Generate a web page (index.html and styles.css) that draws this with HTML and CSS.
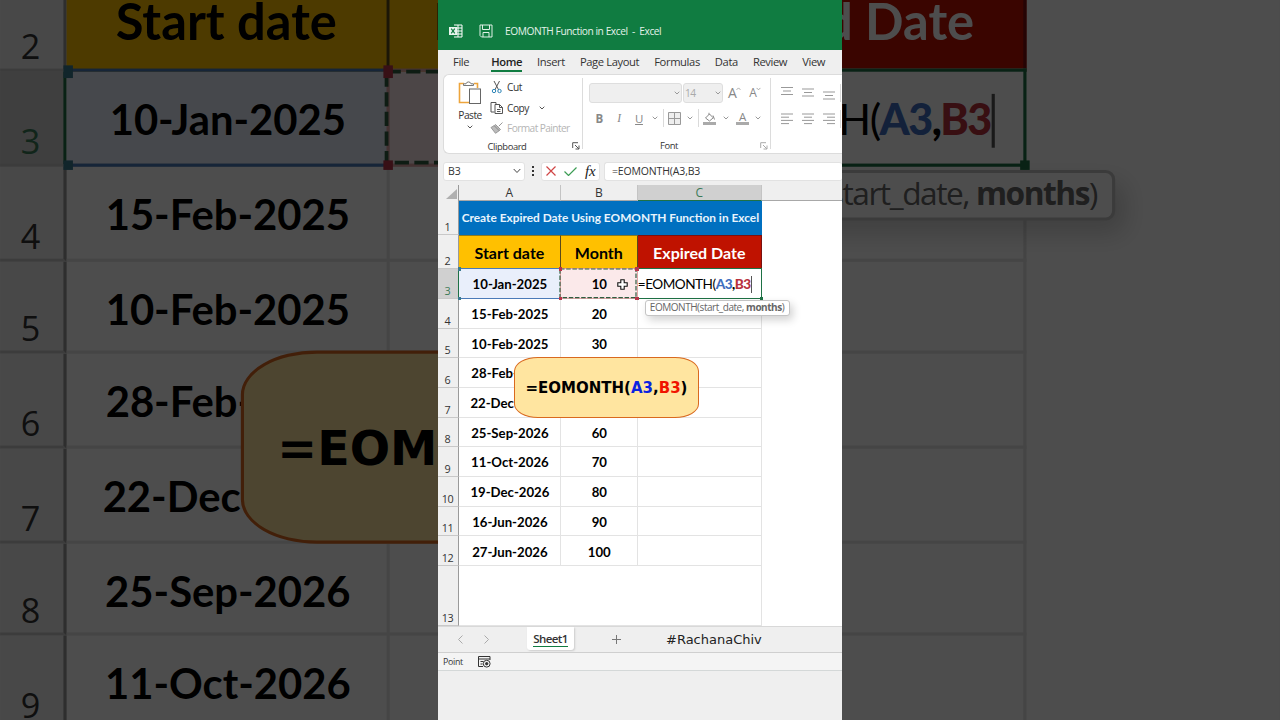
FILE: index.html
```html
<!DOCTYPE html>
<html lang="en">
<head>
  <meta charset="utf-8">
  <title>EOMONTH Function in Excel</title>
  <link rel="stylesheet" href="styles.css">
</head>
<body>
  <div class="backdrop"></div>

  <div class="phone">
    <header class="titlebar">
      <svg class="logo" width="14" height="14" viewBox="0 0 14 14">
        <path d="M5 1h8v12H5M9 1v12M5 4h8M5 7h8M5 10h8" fill="none" stroke="#fff" stroke-width="1"/>
        <rect x="0" y="3" width="8" height="8" fill="#e9f5ee"/>
        <path d="M2.2 4.6l3.6 4.8M5.8 4.6L2.2 9.4" stroke="#107c41" stroke-width="1.2"/>
      </svg>
      <svg class="save" width="14" height="14" viewBox="0 0 14 14" fill="none" stroke="#dff0e6">
        <path d="M1 1h12v12H2.5L1 11.5zM3.5 1v4.5h7V1M4 13V8.5h6V13"/>
      </svg>
      <span class="doc-name">EOMONTH Function in Excel &nbsp;-&nbsp; Excel</span>
    </header>

    <nav class="menu">
      <span class="file">File</span>
      <span class="active">Home</span>
      <span>Insert</span>
      <span>Page Layout</span>
      <span>Formulas</span>
      <span>Data</span>
      <span>Review</span>
      <span>View</span>
    </nav>

    <section class="ribbon">
      <div class="group clipboard">
        <div class="tools">
          <div class="paste">
            <svg width="24" height="25" viewBox="0 0 24 25">
              <path d="M6 3.5H1.5v19H11M16 3.5h3.5V8" fill="none" stroke="#eda53c" stroke-width="1.6"/>
              <path d="M5.5 5.5V3.8H8a2.6 2.6 0 0 1 5 0h2.5v1.7z" fill="#fff" stroke="#777"/>
              <rect x="11.5" y="9" width="11" height="14.5" fill="#fff" stroke="#666"/>
            </svg>
            <span>Paste</span>
            <svg class="chev" width="6" height="4" viewBox="0 0 6 4"><path d="M.7.7L3 3 5.3.7"/></svg>
          </div>
          <div class="actions">
            <div>
              <svg width="14" height="14" viewBox="0 0 14 14" fill="none">
                <path d="M4 1l4.7 9M9.5 1L4.8 10" stroke="#555"/>
                <circle cx="4" cy="11" r="1.7" stroke="#2f86b8"/><circle cx="9.5" cy="11" r="1.7" stroke="#2f86b8"/>
              </svg>
              <span>Cut</span>
            </div>
            <div>
              <svg width="14" height="14" viewBox="0 0 14 14" fill="#fff" stroke="#555">
                <path d="M4.5 11H1V1.5h5V3"/>
                <path d="M5 3.5h4.5l3 3v6H5zM9.5 3.5v3h3M7 8.5h3.5M7 10.5h3.5"/>
              </svg>
              <span>Copy</span>
              <svg class="chev" width="6" height="4" viewBox="0 0 6 4"><path d="M.7.7L3 3 5.3.7"/></svg>
            </div>
            <div class="off">
              <svg width="14" height="14" viewBox="0 0 14 14" fill="#bbb" stroke="#999">
                <path d="M12.5 1.5L8.8 5.2M5.5 3.5l5 5-1.3 1.2-5-5zM4.2 4.7L1 6.5l4.5 5.8 3.7-2.6z"/>
              </svg>
              <span>Format Painter</span>
            </div>
          </div>
        </div>
        <div class="label">Clipboard
          <svg class="launcher" width="8" height="8" viewBox="0 0 8 8"><path d="M.7 6V.7H6M3 3l4 4M7 3.5V7H3.5"/></svg>
        </div>
      </div>

      <div class="group font">
        <div class="tools">
          <div class="line">
            <div class="select family"><svg class="chev" width="6" height="4" viewBox="0 0 6 4"><path d="M.7.7L3 3 5.3.7"/></svg></div>
            <div class="select size">14<svg class="chev" width="6" height="4" viewBox="0 0 6 4"><path d="M.7.7L3 3 5.3.7"/></svg></div>
            <span class="grow">A<svg class="chev" width="5" height="4" viewBox="0 0 6 4"><path d="M.7 3L3 .7 5.3 3"/></svg></span>
            <span class="shrink">A<svg class="chev" width="5" height="4" viewBox="0 0 6 4"><path d="M.7.7L3 3 5.3.7"/></svg></span>
          </div>
          <div class="line styles">
            <b>B</b><i>I</i><u>U</u>
            <svg class="chev" width="6" height="4" viewBox="0 0 6 4"><path d="M.7.7L3 3 5.3.7"/></svg>
            <span class="bar"></span>
            <svg class="borders" width="13" height="13" viewBox="0 0 13 13" fill="#eee" stroke="#999">
              <path d="M.5.5h12v12H.5zM6.5.5v12M.5 6.5h12"/>
            </svg>
            <svg class="chev" width="6" height="4" viewBox="0 0 6 4"><path d="M.7.7L3 3 5.3.7"/></svg>
            <span class="bar"></span>
            <svg class="fill" width="14" height="13" viewBox="0 0 14 13">
              <path d="M6 .8v2M2.5 6L6.5 2l3.7 3.8L6.5 9zM10 3.5l1.5 4" fill="none" stroke="#888"/>
              <rect y="10" width="13" height="3" fill="#aaa"/>
            </svg>
            <svg class="chev" width="6" height="4" viewBox="0 0 6 4"><path d="M.7.7L3 3 5.3.7"/></svg>
            <span class="color">A</span>
            <svg class="chev" width="6" height="4" viewBox="0 0 6 4"><path d="M.7.7L3 3 5.3.7"/></svg>
          </div>
        </div>
        <div class="label">Font
          <svg class="launcher off" width="8" height="8" viewBox="0 0 8 8"><path d="M.7 6V.7H6M3 3l4 4M7 3.5V7H3.5"/></svg>
        </div>
      </div>

      <div class="group align">
        <svg width="12" height="14" viewBox="0 0 12 14"><path d="M0 1.5h12M2 5h8M0 8.5h12"/></svg>
        <svg width="12" height="14" viewBox="0 0 12 14"><path d="M0 3h12M2 6.5h8M0 10h12"/></svg>
        <svg width="12" height="14" viewBox="0 0 12 14"><path d="M0 6h12M2 9.5h8M0 13h12"/></svg>
        <span class="bar"></span>
        <svg width="12" height="14" viewBox="0 0 12 14"><path d="M0 2h12M0 5.2h8M0 8.4h12M0 11.6h8"/></svg>
        <svg width="12" height="14" viewBox="0 0 12 14"><path d="M0 2h12M2 5.2h8M0 8.4h12M2 11.6h8"/></svg>
        <svg width="12" height="14" viewBox="0 0 12 14"><path d="M0 2h12M4 5.2h8M0 8.4h12M4 11.6h8"/></svg>
        <span class="bar"></span>
      </div>
    </section>

    <section class="formula-bar">
      <div class="name-box">B3
        <svg width="8" height="6" viewBox="0 0 8 6" fill="none" stroke="#444"><path d="M.7 1L4 4.5 7.3 1"/></svg>
      </div>
      <svg class="dots" width="2" height="10" viewBox="0 0 2 10" fill="#333"><path d="M0 0h2v2H0zM0 4h2v2H0zM0 8h2v2H0z"/></svg>
      <div class="fx-box">
        <svg width="10" height="10" viewBox="0 0 10 10" fill="none" stroke="#d04545" stroke-width="1.2"><path d="M.5.5l9 9M9.5.5l-9 9"/></svg>
        <svg width="13" height="9" viewBox="0 0 13 9" fill="none" stroke="#3d9d55" stroke-width="1.2"><path d="M.5 4.5l4 4L12.5.5"/></svg>
        <i>fx</i>
      </div>
      <div class="formula">=EOMONTH(A3,B3</div>
    </section>

    <section class="sheet">
      <div class="corner"><svg width="11" height="10" viewBox="0 0 11 10"><path d="M11 0v10H0z" fill="#b0b0b0"/></svg></div>
      <div class="col">A</div>
      <div class="col">B</div>
      <div class="col on">C</div>
      <div class="col rest"></div>

      <div class="row-no">1</div>
      <div class="banner">Create Expired Date Using EOMONTH Function in Excel</div>

      <div class="row-no">2</div>
      <div class="head">Start date</div>
      <div class="head">Month</div>
      <div class="head red">Expired Date</div>

      <div class="row-no on">3</div>
      <div class="cell ref-a">10-Jan-2025<span class="range"></span>
        <em class="h tl"></em><em class="h bl"></em>
      </div>
      <div class="cell ref-b">10
        <span class="range"></span>
        <svg class="ants" width="100%" height="100%"><rect width="100%" height="100%"/></svg>
        <em class="h tl"></em><em class="h tr"></em><em class="h bl"></em><em class="h br"></em>
        <svg class="cursor" width="11" height="11" viewBox="0 0 11 11"><path d="M3.8.8h3.4v3h3v3.4h-3v3H3.8v-3h-3V3.8h3z" fill="#fff" stroke="#111" stroke-width="1.1"/></svg>
      </div>
      <div class="cell editing">
        <span>=EOMONTH(</span><b class="blue">A3</b><b>,</b><b class="crimson">B3</b><span class="caret"></span>
        <div class="hint">EOMONTH(start_date, <b>months</b>)</div>
      </div>

      <div class="row-no">4</div>
      <div class="cell">15-Feb-2025</div><div class="cell">20</div><div class="cell"></div>
      <div class="row-no">5</div>
      <div class="cell">10-Feb-2025</div><div class="cell">30</div><div class="cell"></div>
      <div class="row-no">6</div>
      <div class="cell">28-Feb-2025</div><div class="cell">40</div><div class="cell"></div>
      <div class="row-no">7</div>
      <div class="cell">22-Dec-2025</div><div class="cell">50</div><div class="cell"></div>
      <div class="row-no">8</div>
      <div class="cell">25-Sep-2026</div><div class="cell">60</div><div class="cell"></div>
      <div class="row-no">9</div>
      <div class="cell">11-Oct-2026</div><div class="cell">70</div><div class="cell"></div>
      <div class="row-no">10</div>
      <div class="cell">19-Dec-2026</div><div class="cell">80</div><div class="cell"></div>
      <div class="row-no">11</div>
      <div class="cell">16-Jun-2026</div><div class="cell">90</div><div class="cell"></div>
      <div class="row-no">12</div>
      <div class="cell">27-Jun-2026</div><div class="cell">100</div><div class="cell"></div>
      <div class="row-no">13</div>
      <div class="cell blank"></div>

      <div class="callout">=EOMONTH(<span class="a">A3</span>,<span class="b">B3</span>)</div>
    </section>

    <footer class="tabs">
      <svg width="5" height="9" viewBox="0 0 5 9"><path d="M4.5.5l-4 4 4 4"/></svg>
      <svg width="5" height="9" viewBox="0 0 5 9"><path d="M.5.5l4 4-4 4"/></svg>
      <div class="tab"><span>Sheet1</span></div>
      <svg class="plus" width="9" height="9" viewBox="0 0 9 9"><path d="M4.5 0v9M0 4.5h9"/></svg>
      <span class="handle">#RachanaChiv</span>
    </footer>

    <footer class="status">
      <span>Point</span>
      <svg width="13" height="12" viewBox="0 0 13 12" fill="none" stroke="#333">
        <path d="M5 10.5H.5V.5h11.5V4M.5 3h11.5M2.5 5.5h3M2.5 8h2"/>
        <circle cx="8.7" cy="7.7" r="3.4"/><circle cx="8.7" cy="7.7" r="1.2" fill="#333"/>
      </svg>
    </footer>
  </div>

  <script>
    // the dimmed backdrop is an enlarged copy of the phone screen
    const phone = document.querySelector('.phone');
    document.querySelector('.backdrop').appendChild(phone.cloneNode(true));
  </script>
</body>
</html>
```

FILE: styles.css
```css
* {
  box-sizing: border-box;
}

body {
  margin: 0;
  width: 1280px;
  height: 720px;
  display: flex;
  justify-content: center;
  overflow: hidden;
  background: #000;
  font-family: "Open Sans", sans-serif;
}

/* Backdrop */
.backdrop {
  position: absolute;
  inset: 0;
  display: flex;
  justify-content: center;
  align-items: center;
  overflow: hidden;
  opacity: 0.3;
}

.backdrop .phone {
  transform: scale(3.168);
}

.phone {
  position: relative;
  flex: none;
  width: 404px;
  height: 720px;
  display: flex;
  flex-direction: column;
  overflow: hidden;
  background: #efefef;
  color: #333;
}

svg {
  display: block;
  flex: none;
}

.chev {
  fill: none;
  stroke: #555;
  stroke-width: 1;
}

/* Title bar and menu */
.titlebar {
  height: 50px;
  flex: none;
  display: flex;
  align-items: center;
  padding: 11px 0 0 11px;
  background: #107c41;
  color: #e3f2e9;
  font-size: 10.2px;
}

.save {
  margin: 0 12px 0 16px;
}

.doc-name {
  white-space: nowrap;
  letter-spacing: -0.44px;
}

.menu {
  height: 24px;
  flex: none;
  display: flex;
  align-items: center;
  gap: 15px;
  padding: 0 0 1px 15px;
  font-size: 11.2px;
  letter-spacing: -0.38px;
  white-space: nowrap;
}

.menu .file {
  margin-right: 7px;
}

.menu .active {
  font-weight: 600;
  color: #222;
  box-shadow: 0 2px 0 #107c41;
  line-height: 16px;
  margin-top: 1px;
}

/* Ribbon */
.ribbon {
  height: 80px;
  flex: none;
  margin-left: 5px;
  display: flex;
  background: #fff;
  border: 1px solid #dcdcdc;
  border-right: 0;
  border-radius: 6px 0 0 6px;
}

.group {
  position: relative;
  display: flex;
  flex-direction: column;
  flex: none;
  font-size: 10.2px;
  letter-spacing: -0.5px;
}

.group .tools {
  height: 64px;
}

.group .label {
  height: 15px;
  line-height: 15px;
  padding-right: 13px;
  text-align: center;
  font-size: 9.4px;
  letter-spacing: -0.4px;
  color: #333;
}

.group::after {
  content: "";
  position: absolute;
  right: 0;
  top: 3px;
  height: 71px;
  border-right: 1px solid #dcdcdc;
}

.launcher {
  position: absolute;
  right: 3px;
  bottom: 3px;
  fill: none;
  stroke: #555;
}

.launcher.off {
  stroke: #aaa;
}

.clipboard {
  width: 139px;
}

.clipboard .tools {
  display: flex;
}

.paste {
  width: 44px;
  padding: 5px 0 0 8px;
  display: flex;
  flex-direction: column;
  align-items: center;
}

.paste span {
  margin-top: 3px;
  line-height: 14px;
}

.paste .chev {
  margin-top: 3px;
}

.actions {
  padding: 2px 0 0 2px;
}

.actions div {
  height: 20.5px;
  display: flex;
  align-items: center;
  gap: 3px;
  white-space: nowrap;
}

.actions .chev {
  margin-left: 7px;
}

.actions .off {
  color: #b5b5b5;
  letter-spacing: -0.6px;
}

.font {
  width: 188px;
  color: #888;
}

.font .tools {
  padding: 8px 0 0 6px;
}

.font .label {
  padding-right: 16px;
}

.font .chev {
  stroke: #999;
}

.line {
  height: 20px;
  display: flex;
  align-items: center;
}

.select {
  height: 20px;
  display: flex;
  align-items: center;
  justify-content: flex-end;
  background: #efefef;
  border: 1px solid #dedede;
  border-radius: 3px;
}

.select.family {
  width: 93px;
  padding-right: 1px;
  margin-right: 1px;
}

.select.size {
  width: 40px;
  padding: 0 1px;
  justify-content: space-between;
  color: #aaa;
}

.grow,
.shrink {
  display: flex;
  font-size: 14px;
  line-height: 16px;
  margin-left: 5px;
}

.shrink {
  font-size: 12px;
  margin-left: 8px;
}

.grow .chev,
.shrink .chev {
  margin-top: 2px;
}

.styles {
  margin-top: 5px;
  font-size: 11.5px;
}

.styles b,
.styles i,
.styles u {
  width: 20px;
  text-align: center;
}

.styles i {
  font-family: "Liberation Serif", serif;
}

.styles u {
  margin-right: 3px;
}

.bar {
  width: 1px;
  height: 18px;
  background: #dadada;
}

.styles .bar {
  margin: 0 4px 0 5px;
}

.borders,
.fill,
.color {
  margin-right: 6px;
}

.color {
  width: 13px;
  height: 13px;
  margin-left: 7px;
  line-height: 9px;
  text-align: center;
  border-bottom: 3px solid #aaa;
}

.align {
  padding: 9px 0 0 10px;
  width: 72px;
  display: grid;
  grid-template-columns: 12px 12px 12px 1px;
  grid-template-rows: 20px 20px;
  align-content: start;
  gap: 6px 9px;
  stroke: #999;
}

.align::after {
  display: none;
}

.align svg {
  margin-top: 2px;
}

.align .bar {
  margin-left: -4px;
}

/* Formula bar */
.formula-bar {
  height: 31px;
  flex: none;
  display: flex;
  align-items: center;
  padding: 3px 0 0 5px;
  font-size: 10.5px;
  letter-spacing: -0.15px;
}

.name-box,
.fx-box,
.formula {
  height: 19px;
  display: flex;
  align-items: center;
  background: #fff;
  border: 1px solid #e2e2e2;
  border-radius: 3px;
}

.name-box {
  width: 82px;
  justify-content: space-between;
  padding: 0 3px 0 4px;
}

.dots {
  margin: 0 7px;
}

.fx-box {
  width: 59px;
  padding: 0 4px;
  gap: 8px;
}

.fx-box i {
  font: italic 15px "Liberation Serif", serif;
  color: #222;
}

.formula {
  flex: 1;
  margin-left: 4px;
  padding-left: 7px;
  border-right: 0;
}

/* Worksheet */
.sheet {
  position: relative;
  height: 441px;
  flex: none;
  display: grid;
  grid-template-columns: 21px 101.8px 77px 124px 1fr;
  grid-template-rows: 16.2px 34px 34.2px repeat(10, 29.68px) 59.8px;
  background: #fff;
  font-family: Lato, sans-serif;
  color: #000;
}

.corner,
.col,
.row-no {
  background: #efefef;
  font-family: "Open Sans", sans-serif;
  color: #333;
}

.corner,
.row-no {
  grid-column: 1;
  border-right: 1px solid #9a9a9a;
}

.corner {
  padding: 4px 0 0 8px;
}

.col {
  border-right: 1px solid #c4c4c4;
  border-bottom: 1px solid #a8a8a8;
  font-size: 12px;
  line-height: 16px;
  text-align: center;
}

.col.on {
  background: #d0d0d0;
  border-bottom-color: #1e7145;
  color: #3b7a57;
}

.col.rest {
  border-right: 0;
}

.row-no {
  display: flex;
  justify-content: center;
  align-items: flex-end;
  padding-right: 1px;
  border-bottom: 1px solid #c8c8c8;
  font-size: 10.8px;
  letter-spacing: -0.3px;
  line-height: 14px;
}

.row-no.on {
  background: #d0d0d0;
  border-right-color: #1e7145;
  color: #3b7a57;
}

.banner,
.head,
.cell {
  display: flex;
  justify-content: center;
  align-items: center;
  font-weight: bold;
  white-space: nowrap;
}

.banner {
  grid-column: 2 / 5;
  padding-bottom: 1px;
  background: #0070c0;
  color: #e8f4fc;
  font-size: 11.9px;
}

.head {
  background: #ffc000;
  border-right: 1px solid #5a4a1a;
  border-top: 1px solid #8a7a20;
  padding-bottom: 1.5px;
  font-size: 16px;
}

.head.red {
  background: #bf1200;
  border-color: #7a1010;
  color: #fff;
}

.cell {
  position: relative;
  border-right: 1px solid #e3e3e3;
  border-bottom: 1px solid #e3e3e3;
  font-size: 13.2px;
  padding: 1.5px 0 0 1px;
}

.blank {
  grid-column: 2 / 5;
}

/* Row being edited */
.ref-a {
  z-index: 1;
  background: #e9effb;
}

.ref-a,
.ref-b {
  padding-top: 1px;
}

.range {
  position: absolute;
  inset: -1px -1px -1px 0;
  border: solid #4a7ab8;
  border-width: 1px 0;
}

.ref-b {
  z-index: 3;
  background: #fbe9ea;
}

.ref-b .range {
  inset: -1px;
  border: 1px solid #e2a6a6;
}

.ants {
  position: absolute;
  inset: -0.5px;
  overflow: visible;
}

.ants rect {
  fill: none;
  stroke: #2f5d40;
  stroke-width: 1.2;
  stroke-dasharray: 4.5 1.7;
}

.h {
  position: absolute;
  z-index: 3;
  width: 3.5px;
  height: 3.5px;
  background: #b8354a;
}

.tl { top: -2px; left: -2px; }
.tr { top: -2px; right: -2px; }
.bl { bottom: -2px; left: -2px; }
.br { bottom: -2px; right: -2px; }

.ref-a .h {
  left: -1px;
  width: 2.5px;
  background: #3a7a90;
}

.cursor {
  position: absolute;
  left: 56px;
  top: 10px;
}

.editing {
  z-index: 2;
  justify-content: flex-start;
  margin-top: -1px;
  padding: 1px 0 0;
  background: #fff;
  border: 1px solid #1e7145;
  border-left: 0;
  font-size: 13.6px;
  letter-spacing: -0.5px;
}

.editing::after {
  content: "";
  position: absolute;
  right: -2px;
  bottom: -2px;
  width: 3px;
  height: 3px;
  background: #1e7145;
}

.editing span {
  font-weight: normal;
}

.blue {
  color: #3f6fbf;
}

.crimson {
  color: #b8323e;
}

.editing .caret {
  width: 0.6px;
  height: 17px;
  background: #555;
}

.hint {
  position: absolute;
  left: 7px;
  top: 31px;
  height: 16px;
  padding: 0 5px 0 4px;
  line-height: 13px;
  border: 1px solid #c4c4c4;
  border-radius: 3px;
  background: #fff;
  box-shadow: 3px 4px 8px rgba(0, 0, 0, 0.18);
  color: #666;
  font-family: "Open Sans", sans-serif;
  font-size: 10px;
  font-weight: normal;
  letter-spacing: -0.46px;
}

.callout {
  position: absolute;
  z-index: 4;
  left: 76px;
  top: 171.5px;
  width: 185px;
  height: 61.5px;
  display: flex;
  justify-content: center;
  align-items: center;
  padding-top: 1px;
  background: #ffe5a0;
  border: solid #d9691f;
  border-width: 1px 1.5px;
  border-radius: 24px / 14px;
  font: bold 15px "DejaVu Sans", sans-serif;
}

.callout .a {
  color: #0a22e0;
}

.callout .b {
  color: #f01400;
}

/* Sheet tabs and status bar */
.tabs {
  height: 27px;
  flex: none;
  display: flex;
  align-items: center;
  padding-left: 20px;
  border-top: 1px solid #d8d8d8;
  border-bottom: 1px solid #cfcfcf;
}

.tabs svg {
  margin-right: 21px;
  fill: none;
  stroke: #aaa;
}

.tab {
  align-self: flex-start;
  width: 47px;
  height: 23px;
  margin-left: 17px;
  display: flex;
  justify-content: center;
  align-items: center;
  background: #fff;
  border-radius: 0 0 3px 3px;
  box-shadow: 1px 1px 2px #ccc;
}

.tab span {
  border-bottom: 1px solid #107c41;
  font-size: 11.5px;
  font-weight: 600;
  letter-spacing: -0.6px;
  line-height: 15px;
}

.tabs .plus {
  margin: 0 45px 0 38px;
  stroke: #777;
}

.handle {
  font: 13px "DejaVu Sans", sans-serif;
  color: #222;
}

.status {
  height: 18px;
  flex: none;
  display: flex;
  align-items: center;
  gap: 15px;
  padding-left: 5px;
  background: #f4f4f4;
  border-bottom: 1px solid #d4d8d8;
  font-size: 8.8px;
  letter-spacing: -0.3px;
}
```
